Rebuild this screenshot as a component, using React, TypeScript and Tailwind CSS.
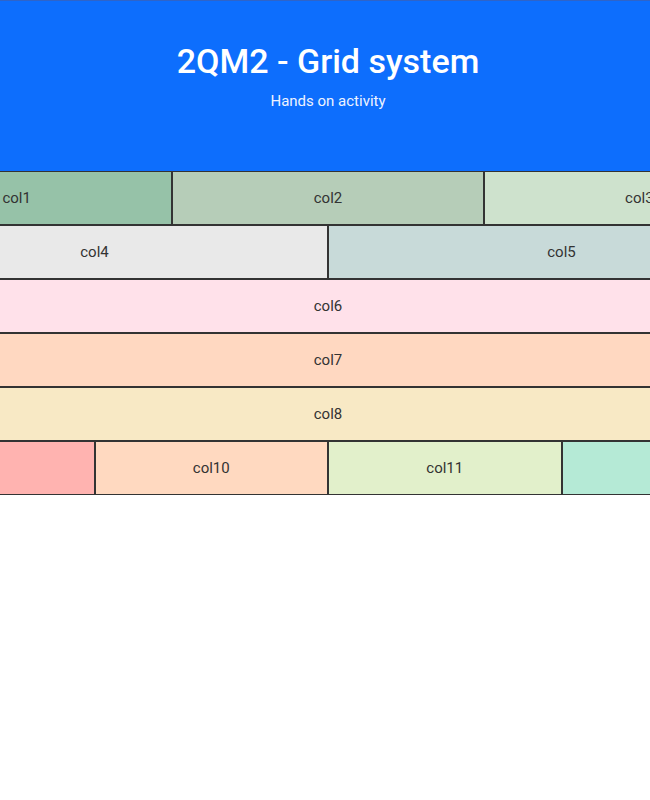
import React from 'react'

type Cell = { label: string; span: string; bg: string }

// grid rows, 12 columns each
const rows: Cell[][] = [
  [
    { label: 'col1', span: 'col-span-4', bg: 'bg-[#96c2a8]' },
    { label: 'col2', span: 'col-span-4', bg: 'bg-[#b6cdb8]' },
    { label: 'col3', span: 'col-span-4', bg: 'bg-[#cee2cd]' },
  ],
  [
    { label: 'col4', span: 'col-span-6', bg: 'bg-[#e9e9e9]' },
    { label: 'col5', span: 'col-span-6', bg: 'bg-[#c8dad9]' },
  ],
  [{ label: 'col6', span: 'col-span-12', bg: 'bg-[#ffe1ea]' }],
  [{ label: 'col7', span: 'col-span-12', bg: 'bg-[#ffd8c1]' }],
  [{ label: 'col8', span: 'col-span-12', bg: 'bg-[#f8e9c5]' }],
  [
    { label: 'col9', span: 'col-span-3', bg: 'bg-[#ffb3b0]' },
    { label: 'col10', span: 'col-span-3', bg: 'bg-[#ffd9c0]' },
    { label: 'col11', span: 'col-span-3', bg: 'bg-[#e2f0cb]' },
    { label: 'col12', span: 'col-span-3', bg: 'bg-[#b5ead6]' },
  ],
]

export default function App() {
  return (
    <div className="min-h-screen bg-white overflow-hidden font-['Roboto',sans-serif]">
      {/* Header */}
      <header className="h-[171px] bg-[#0d6efd] border-t border-[#2f64c8] flex flex-col items-center pt-[40px] pl-[6px] text-white">
        <h1 className="text-[34px] font-medium leading-[40px]">2QM2 - Grid system</h1>
        <p className="text-[15px] leading-[20px] mt-[10px] text-[#eef3ff]">Hands on activity</p>
      </header>

      {/* Grid */}
      <div className="w-[934px] ml-[-139px]">
        {rows.map((row, i) => (
          <div key={i} className="grid grid-cols-12">
            {row.map((c) => (
              <div
                key={c.label}
                className={`${c.span} ${c.bg} h-[54px] border border-[#333] flex items-center justify-center text-[15px] text-[#333]`}
              >
                {c.label}
              </div>
            ))}
          </div>
        ))}
      </div>
    </div>
  )
}
